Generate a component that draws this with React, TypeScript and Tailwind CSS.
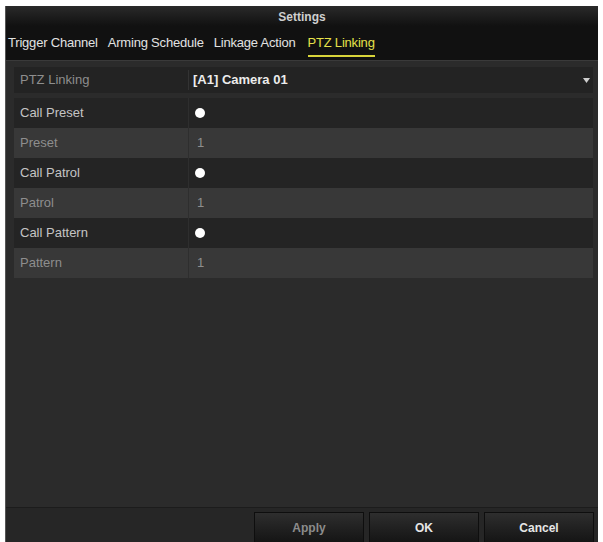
const tabs = ["Trigger Channel", "Arming Schedule", "Linkage Action", "PTZ Linking"];

type Row = { label: string; kind: "dot" | "num"; };

const rows: Row[] = [
  { label: "Call Preset", kind: "dot" },
  { label: "Preset", kind: "num" },
  { label: "Call Patrol", kind: "dot" },
  { label: "Patrol", kind: "num" },
  { label: "Call Pattern", kind: "dot" },
  { label: "Pattern", kind: "num" },
];

function Button({ label, dim }: { label: string; dim?: boolean }) {
  return (
    <button
      className={`flex h-[31px] w-[110px] items-center justify-center border border-[#0e0e0e] bg-gradient-to-b from-[#2e2e2e] to-[#151515] text-[12px] font-bold ${
        dim ? "text-[#8c8c8c]" : "text-[#e6e6e6]"
      }`}
    >
      {label}
    </button>
  );
}

export default function App() {
  return (
    <div className="h-[542px] w-[603px] bg-white pl-[5px] pr-[5px] pt-[6px] font-['Liberation_Sans',Arial,sans-serif]">
      <div className="flex h-[536px] flex-col border-l border-[#555] bg-[#141414]">
        <div className="flex h-[20px] items-end justify-center bg-gradient-to-b from-[#2a2a2a] to-[#111] text-[12px] font-bold text-[#cfcfcf]">
          Settings
        </div>
        <div className="flex h-[34px] items-center gap-[10px] bg-[#111] pl-[2px] text-[13px] tracking-[-0.2px] text-[#e2e2e2]">
          {tabs.map((t, i) => (
            <div key={t} className={`relative ${i === 3 ? "ml-[2px] text-[#e6e14a]" : ""}`}>
              {t}
              {i === 3 && (
                <div className="absolute -bottom-[4px] left-0 right-0 h-[2px] bg-[#d8d43a]" />
              )}
            </div>
          ))}
        </div>
        <div className="flex-1 border-t border-[#3a3a3a] bg-[#2b2b2b] pl-[8px] pr-[5px] pt-[6px]">
          <div className="flex h-[26px] items-center bg-[#232323] text-[13px]">
            <div className="w-[175px] border-r border-[#333] pl-[6px] text-[#8e8e8e]">PTZ Linking</div>
            <div className="flex flex-1 items-center justify-between pl-[4px] pr-[3px] font-bold text-[#ececec]">
              <span>[A1] Camera 01</span>
              <svg width="7" height="5" viewBox="0 0 7 5">
                <path d="M0 0 L7 0 L3.5 5 Z" fill="#cfcfcf" />
              </svg>
            </div>
          </div>
          <div className="mt-[5px] flex flex-col">
            {rows.map((r, i) => (
              <div
                key={r.label}
                className={`flex h-[30px] items-center text-[13px] ${i % 2 === 0 ? "bg-[#242424]" : "bg-[#383838]"}`}
              >
                <div
                  className={`flex h-full w-[175px] items-center border-r border-[#2e2e2e] pl-[6px] ${
                    r.kind === "dot" ? "text-[#c4c4c4]" : "text-[#8e8e8e]"
                  }`}
                >
                  {r.label}
                </div>
                <div className="flex flex-1 items-center pl-[6px]">
                  {r.kind === "dot" ? (
                    <div className="h-[10px] w-[10px] rounded-full bg-white" />
                  ) : (
                    <span className="pl-[2px] text-[#8e8e8e]">1</span>
                  )}
                </div>
              </div>
            ))}
          </div>
        </div>
        <div className="flex h-[35px] items-start justify-end gap-[5px] border-t border-[#1c1c1c] bg-[#262626] pr-[4px] pt-[4px]">
          <Button label="Apply" dim />
          <Button label="OK" />
          <Button label="Cancel" />
        </div>
      </div>
    </div>
  );
}
